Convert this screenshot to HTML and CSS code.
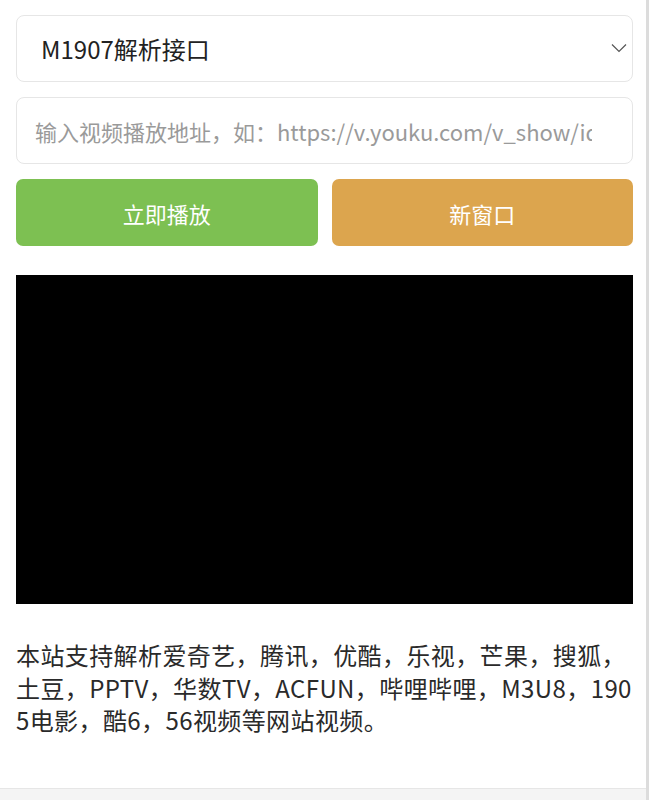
FILE: index.html
```html
<!DOCTYPE html>
<html lang="zh-CN">
<head>
<meta charset="utf-8">
<title>视频解析</title>
<link rel="stylesheet" href="styles.css">
</head>
<body>
<div class="screen">
  <div class="page">
    <div class="content">
      <div class="select">
        <span class="select-text">M1907解析接口</span>
        <svg class="chev" width="16" height="10" viewBox="0 0 16 10"><polyline points="1,1.5 8,8.5 15,1.5" fill="none" stroke="#555" stroke-width="1.2"/></svg>
      </div>
      <div class="input"><span class="placeholder">输入视频播放地址，如：https://v.youku.com/v_show/id_XNDk4ODQ5NjU2OA==.html</span></div>
      <div class="buttons">
        <div class="btn btn-play">立即播放</div>
        <div class="btn btn-new">新窗口</div>
      </div>
      <div class="video"></div>
      <p class="desc">本站支持解析爱奇艺，腾讯，优酷，乐视，芒果，搜狐，土豆，PPTV，华数TV，ACFUN，哔哩哔哩，M3U8，1905电影，酷6，56视频等网站视频。</p>
    </div>
    <div class="bottombar"></div>
  </div>
  <div class="edge"></div>
</div>
</body>
</html>
```
FILE: styles.css
```css
html, body {
  margin: 0;
  padding: 0;
  background: #fff;
}
body {
  font-family: "Noto Sans CJK SC", "Noto Sans", sans-serif;
  color: #222;
}
.screen {
  display: flex;
  height: 800px;
  overflow: hidden;
}
.page {
  flex: 1;
  min-width: 0;
  display: flex;
  flex-direction: column;
}
.content {
  flex: 1;
  min-width: 0;
  padding: 15px 13px 0 16px;
}
.edge {
  width: 3px;
  flex: none;
  background: #dcdcdc;
}
.bottombar {
  height: 11px;
  background: #f4f4f4;
  border-top: 1px solid #e6e6e6;
}
.select {
  height: 67px;
  box-sizing: border-box;
  border: 1px solid #e6e6e6;
  border-radius: 8px;
  display: flex;
  align-items: center;
  justify-content: space-between;
  padding: 0 5px 0 24px;
}
.select-text {
  font-size: 24px;
  color: #222;
}
.chev {
  margin-top: -2px;
}
.input {
  margin-top: 15px;
  height: 67px;
  box-sizing: border-box;
  border: 1px solid #e6e6e6;
  border-radius: 8px;
  display: flex;
  align-items: center;
  padding: 0 40px 0 18px;
  overflow: hidden;
}
.placeholder {
  min-width: 0;
  font-size: 22px;
  color: #9a9a9a;
  white-space: nowrap;
  overflow: hidden;
}
.buttons {
  margin-top: 15px;
  display: flex;
  gap: 14px;
}
.btn {
  flex: 1 1 0;
  min-width: 0;
  height: 67px;
  border-radius: 7px;
  color: #fff;
  font-size: 22px;
  display: flex;
  align-items: center;
  justify-content: center;
}
.btn-play {
  background: #7dc052;
}
.btn-new {
  background: #dca54e;
}
.video {
  margin-top: 29px;
  height: 329px;
  background: #000;
}
.desc {
  margin: 35px 0 0;
  font-size: 24px;
  line-height: 32.5px;
  letter-spacing: 0.4px;
  color: #2a2a2a;
  word-break: break-all;
}
```
